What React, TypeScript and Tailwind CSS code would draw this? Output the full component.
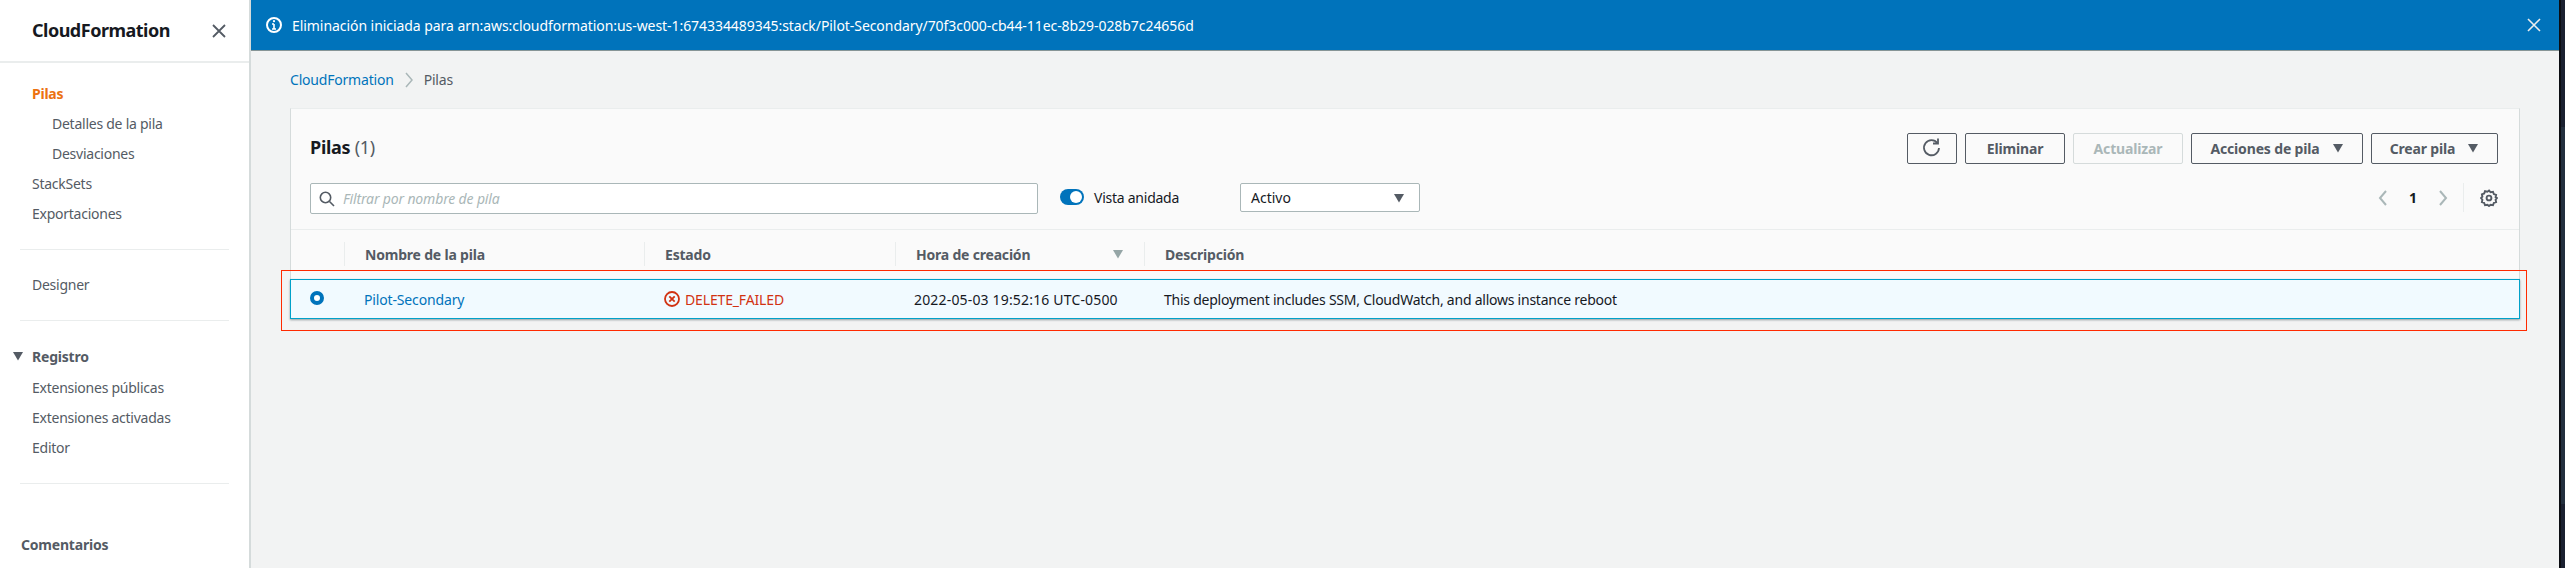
const font = { fontFamily: '"Noto Sans", sans-serif' };
import React from "react";

function Tri({ className = "" }: { className?: string }) {
  return (
    <svg width="12" height="10" viewBox="0 0 12 10" className={className}>
      <path d="M1 1h10L6 9.5z" fill="currentColor" />
    </svg>
  );
}

function Btn({ children, w, disabled }: { children: React.ReactNode; w: string; disabled?: boolean }) {
  return (
    <div
      className={`${w} h-[31px] flex items-center justify-center gap-[12px] rounded-[2px] border text-[14px] font-bold tracking-[-0.15px] ${
        disabled ? "border-[#d5dbdb] text-[#aab7b8]" : "border-[#545b64] text-[#545b64]"
      }`}
    >
      {children}
    </div>
  );
}

function NavItem({ children, cls = "" }: { children: React.ReactNode; cls?: string }) {
  return <div className={`h-[30px] flex items-center text-[14px] tracking-[-0.25px] text-[#545b64] ${cls}`}>{children}</div>;
}

function Th({ w, children, sep = true, cls = "" }: { w: string; children?: React.ReactNode; sep?: boolean; cls?: string }) {
  return (
    <div className={`${w} h-[24px] flex items-center text-[14px] font-bold tracking-[-0.2px] text-[#545b64] ${sep ? "border-l border-[#eaeded] pl-[20px]" : ""} ${cls}`}>
      {children}
    </div>
  );
}

export default function App() {
  return (
    <div className="relative w-[2565px] h-[568px] flex overflow-hidden bg-[#f2f3f3]" style={font}>
      <aside className="w-[251px] h-full shrink-0 bg-white border-r-2 border-[#d5dbdb] flex flex-col">
        <div className="h-[63px] shrink-0 border-b-2 border-[#eaeded] pl-[32px] pr-[22px] flex items-center justify-between">
          <span className="text-[18px] font-bold tracking-[-0.5px] text-[#16191f]">CloudFormation</span>
          <svg width="16" height="16" viewBox="0 0 16 16" stroke="#545b64" strokeWidth="1.8" fill="none">
            <path d="M2 2l12 12M14 2L2 14" />
          </svg>
        </div>
        <div className="pt-[15px] pl-[32px]">
          <NavItem cls="!text-[#ec7211] font-bold">Pilas</NavItem>
          <NavItem cls="pl-[20px]">Detalles de la pila</NavItem>
          <NavItem cls="pl-[20px]">Desviaciones</NavItem>
          <NavItem>StackSets</NavItem>
          <NavItem>Exportaciones</NavItem>
        </div>
        <div className="mx-[20px] mt-[21px] h-px bg-[#eaeded]" />
        <div className="pl-[32px] mt-[19px]">
          <NavItem>Designer</NavItem>
        </div>
        <div className="mx-[20px] mt-[21px] h-px bg-[#eaeded]" />
        <div className="mt-[20px] pl-[12px] h-[30px] flex items-center gap-[8px] text-[14px] font-bold tracking-[-0.2px] text-[#545b64]">
          <svg width="12" height="10" viewBox="0 0 12 10"><path d="M1 1h10L6 9.5z" fill="#545b64" /></svg>
          Registro
        </div>
        <div className="pl-[32px] pt-[1px]">
          <NavItem>Extensiones públicas</NavItem>
          <NavItem>Extensiones activadas</NavItem>
          <NavItem>Editor</NavItem>
        </div>
        <div className="mx-[20px] mt-[21px] h-px bg-[#eaeded]" />
        <div className="pl-[21px] mt-[51px] text-[14px] leading-[20px] font-bold tracking-[-0.2px] text-[#545b64]">Comentarios</div>
      </aside>

      <main className="flex-1 min-w-0 flex flex-col">
        <div className="h-[51px] shrink-0 bg-[#0073bb] border-b border-[#879596] pl-[14px] pr-[17px] flex items-center text-white text-[14px]">
          <svg width="18" height="18" viewBox="0 0 18 18" fill="none" stroke="white" strokeWidth="2">
            <circle cx="9" cy="9" r="7" />
            <path d="M9 8v5M7 13h4M7 8h2" strokeWidth="1.6" />
            <circle cx="9" cy="5.2" r="1.1" fill="white" stroke="none" />
          </svg>
          <span className="ml-[9px] flex-1 tracking-[-0.06px]">Eliminación iniciada para arn:aws:cloudformation:us-west-1:674334489345:stack/Pilot-Secondary/70f3c000-cb44-11ec-8b29-028b7c24656d</span>
          <svg width="16" height="16" viewBox="0 0 16 16" stroke="#eaeded" strokeWidth="1.6" fill="none">
            <path d="M2 2l12 12M14 2L2 14" />
          </svg>
        </div>
        <div className="h-[57px] shrink-0 pl-[39px] flex items-center text-[14px] tracking-[-0.2px]">
          <span className="text-[#0073bb]">CloudFormation</span>
          <svg width="12" height="16" viewBox="0 0 12 16" fill="none" stroke="#aab7b8" strokeWidth="1.5" className="mx-[9px]">
            <path d="M3 1l6 7-6 7" />
          </svg>
          <span className="text-[#545b64]">Pilas</span>
        </div>
        <section className="ml-[39px] w-[2230px] bg-[#fafafa] border-t border-[#eaeded] border-l border-r border-l-[#d5dbdb] border-r-[#d5dbdb]">
          <div className="h-[121px] border-b border-[#eaeded] pl-[19px] pr-[21px] flex flex-col">
            <div className="h-[74px] flex items-center justify-between pt-[4px]">
              <div className="text-[18px] font-bold tracking-[-0.3px] text-[#16191f] -mt-[1px]">
                Pilas <span className="font-normal text-[#545b64]">(1)</span>
              </div>
              <div className="flex gap-[8px]">
                <Btn w="w-[50px]">
                  <svg width="20" height="20" viewBox="0 0 20 20" fill="none" stroke="#545b64" strokeWidth="1.8">
                    <path d="M15.5 5.2A7.5 7.5 0 1 0 17 10" />
                    <path d="M11 5.5h5v-5" />
                  </svg>
                </Btn>
                <Btn w="w-[100px]">Eliminar</Btn>
                <Btn w="w-[110px]" disabled>Actualizar</Btn>
                <Btn w="w-[172px]">Acciones de pila <Tri /></Btn>
                <Btn w="w-[127px]">Crear pila <Tri /></Btn>
              </div>
            </div>
            <div className="flex items-start">
              <div className="w-[728px] h-[31px] bg-white border border-[#aab7b8] rounded-[2px] flex items-center pl-[8px] gap-[8px]">
                <svg width="16" height="16" viewBox="0 0 16 16" fill="none" stroke="#545b64" strokeWidth="1.6">
                  <circle cx="6.5" cy="6.5" r="5.2" /><path d="M10.5 10.5L15 15" />
                </svg>
                <span className="italic text-[14px] tracking-[-0.15px] text-[#aab7b8]">Filtrar por nombre de pila</span>
              </div>
              <div className="ml-[22px] w-[180px] h-[28px] flex items-center">
                <div className="w-[24px] h-[16px] rounded-full bg-[#0073bb] flex justify-end items-center pr-[2px]">
                  <div className="w-[12px] h-[12px] rounded-full bg-white" />
                </div>
                <span className="ml-[10px] text-[14px] tracking-[-0.25px] text-[#16191f]">Vista anidada</span>
              </div>
              <div className="w-[180px] h-[29px] border border-[#aab7b8] rounded-[2px] bg-white flex items-center justify-between pl-[10px] pr-[14px] text-[14px] text-[#16191f]">
                Activo <Tri className="text-[#545b64]" />
              </div>
              <div className="ml-auto h-[29px] flex items-center text-[#16191f]">
                <svg width="12" height="18" viewBox="0 0 12 18" fill="none" stroke="#aab7b8" strokeWidth="2"><path d="M9 2L3 9l6 7" /></svg>
                <span className="w-[48px] text-center text-[14px] font-bold">1</span>
                <svg width="12" height="18" viewBox="0 0 12 18" fill="none" stroke="#aab7b8" strokeWidth="2"><path d="M3 2l6 7-6 7" /></svg>
                <div className="ml-[14px] h-[29px] w-px bg-[#eaeded]" />
                <svg width="18" height="18" viewBox="0 0 18 18" fill="none" stroke="#545b64" strokeWidth="1.9" className="ml-[16px]">
                  <path d="M9 1.5l1.6 1.8 2.4-.5.8 2.3 2.3.8-.5 2.4L17 9l-1.4 1.7.5 2.4-2.3.8-.8 2.3-2.4-.5L9 17l-1.6-1.3-2.4.5-.8-2.3-2.3-.8.5-2.4L1 9l1.4-1.3-.5-2.4 2.3-.8.8-2.3 2.4.5z" />
                  <circle cx="9" cy="9" r="2.4" />
                </svg>
              </div>
            </div>
          </div>
          <div className="h-[49px] pt-[12px] flex">
            <Th w="w-[53px]" sep={false} />
            <Th w="w-[300px]">Nombre de la pila</Th>
            <Th w="w-[251px]">Estado</Th>
            <Th w="w-[249px]" cls="pr-[20px] justify-between">
              Hora de creación
              <svg width="12" height="10" viewBox="0 0 12 10"><path d="M1 1h10L6 9.5z" fill="#95a5a6" /></svg>
            </Th>
            <Th w="flex-1">Descripción</Th>
          </div>
          <div className="h-[40px] -mx-px bg-[#f1faff] border border-[#00a1c9] shadow-[0_1px_2px_rgba(0,28,36,0.4)] flex items-center text-[14px] text-[#16191f]">
            <div className="w-[53px] pl-[19px] -mt-[2px] shrink-0">
              <div className="w-[14px] h-[14px] rounded-full border-[4px] border-[#0073bb] bg-white" />
            </div>
            <div className="w-[300px] pl-[20px] tracking-[-0.15px] text-[#0073bb]">Pilot-Secondary</div>
            <div className="w-[251px] pl-[20px] flex items-center gap-[5px] tracking-[-0.15px] text-[#d13212]">
              <svg width="16" height="16" viewBox="0 0 16 16" fill="none" stroke="#d13212" strokeWidth="1.8">
                <circle cx="8" cy="8" r="7" /><path d="M5.3 5.3l5.4 5.4M10.7 5.3l-5.4 5.4" />
              </svg>
              DELETE_FAILED
            </div>
            <div className="w-[250px] pl-[19px] tracking-[0.17px]">2022-05-03 19:52:16 UTC-0500</div>
            <div className="pl-[19px] tracking-[-0.24px]">This deployment includes SSM, CloudWatch, and allows instance reboot</div>
          </div>
        </section>
      </main>
      <div className="w-[6px] shrink-0 flex flex-col border-l-[2px] border-[#0b0d12]">
        <div className="h-[127px] bg-[#1a2030]" />
        <div className="flex-1 bg-[#232f3e]" />
        <div className="h-[64px] bg-[#1a2030]" />
      </div>
      <div className="absolute left-[281px] top-[270px] w-[2246px] h-[61px] border border-[#ff2a00] pointer-events-none" />
    </div>
  );
}
